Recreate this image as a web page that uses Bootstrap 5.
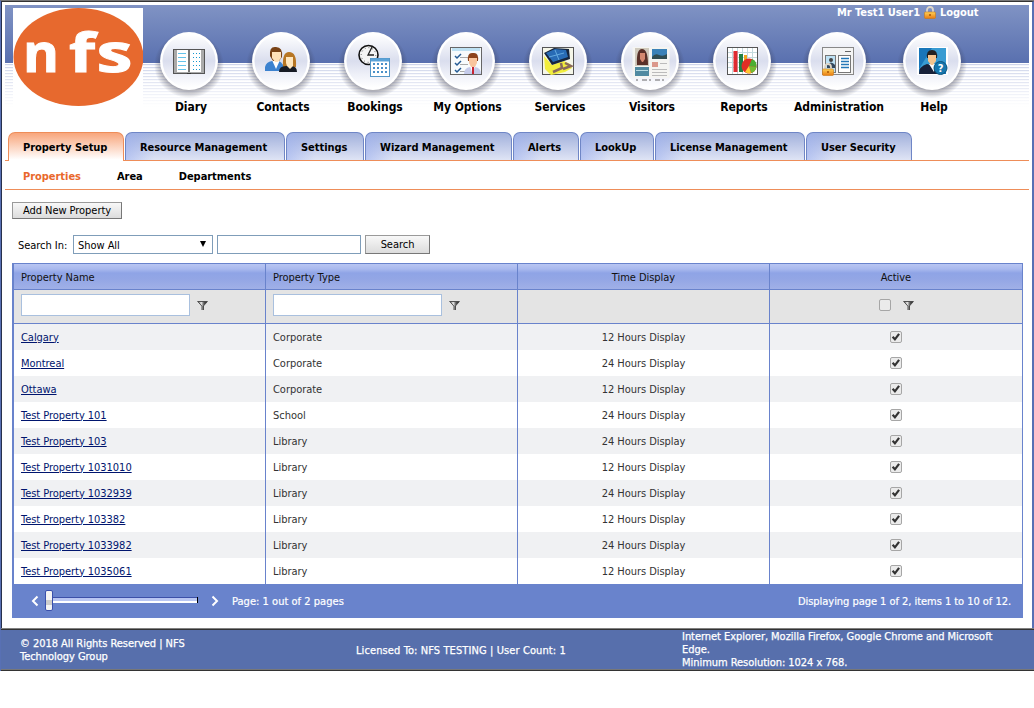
<!DOCTYPE html>
<html lang="en">
<head>
<meta charset="utf-8">
<title>Property Setup</title>
<link href="https://cdn.jsdelivr.net/npm/bootstrap@5.3.0/dist/css/bootstrap.min.css" rel="stylesheet">
<style>
body{font-family:"DejaVu Sans Condensed","DejaVu Sans",sans-serif;font-stretch:condensed;font-size:11px;line-height:13px;color:#000;background:#fff;letter-spacing:-.04px}
.shell{height:671px;border-left:1px solid #5870b4;border-top:1px solid #777;}
.inner{height:627px;border-left:1px solid #27304c;border-right:2px solid #5870b4;border-top:1px solid #333;padding:3px 3px 0}
.masthead{height:127px;position:relative;background:
 linear-gradient(rgba(255,255,255,0) 58px,rgba(255,255,255,.1) 58px,#fff 102px),
 linear-gradient(#8093c4,#5970af) 0 0/100% 58px no-repeat,
 repeating-linear-gradient(#fff 0 1px,#c9d0e8 1px 2px,#f3f5fb 2px 3px) 0 58px/100% 45px no-repeat;}
.logo{margin:3px 0 0 8px;width:130px;height:99px;flex:none}
.logo text{font-family:"Open Sans",sans-serif;font-stretch:normal;font-weight:700;letter-spacing:0}
.usr{position:absolute;left:832px;top:1px;color:#fff;font-weight:700;white-space:nowrap;height:13px}
.mods{display:grid;grid-template-columns:92px 92px 92px 93px 92px 92px 92px 98px 92px;padding:22px 0 0 2px}
.mods a{color:#000;font-weight:700;font-size:12px;line-height:16px;text-decoration:none;text-align:center;white-space:nowrap}
.mods svg{display:block;margin:0 auto;width:72px;height:72px;position:relative;left:-2px}
.mods span{display:block}
.tabs{height:29px;border-bottom:1px solid #ee8d59;padding-left:3px;gap:1px}
.tabs a{height:28px;padding:8px 0 0 14px;border:1px solid #6f86c6;border-bottom:0;border-radius:7px 7px 0 0;background:linear-gradient(90deg,rgba(155,175,240,.55),rgba(155,175,240,0) 28px),linear-gradient(#a2b1dc,#dfe4f5);color:#000;text-decoration:none;font-weight:700;white-space:nowrap;line-height:13px}
.tabs a.on{height:29px;border-color:#ee8d59;background:linear-gradient(#f8a67c,#fff 95%)}
.w1{width:116px}.w2{width:160px}.w3{width:78px}.w4{width:147px}.w5{width:66px}.w6{width:74px}.w7{width:150px}.w8{width:106px}
.subs{height:29px;border-bottom:1px solid #ee8d59;padding:9px 0 0 18px;font-weight:700;gap:36px}
.subs a{color:#000;text-decoration:none}
.subs a.on{color:#e9682c}
.body-area{padding:12px 6px 0 7px}
.wbtn{display:block;border:1px solid #9a9a9a;border-right-color:#777;border-bottom-color:#777;background:linear-gradient(#f8f8f8,#dcdcdc);padding:0;font-size:11px;line-height:13px;text-align:center;color:#000;letter-spacing:-.04px}
.add{width:110px;height:17px}
.go{width:65px;height:19px;margin-left:4px}
.find{margin-top:16px;padding-left:6px;height:19px}
.find span{padding-top:1px}
.lbl{width:50px;white-space:nowrap}
.sel{width:140px;height:19px;border:1px solid #7f9db9;padding:0 5px 0 4px;margin-left:5px}
.txt{width:144px;height:19px;border:1px solid #7f9db9;margin-left:4px;padding:0}
.gridbox{margin-top:9px;border:1px solid #6983cc;border-left-width:2px;width:1011px}
.gridbox table{width:100%;table-layout:fixed;border-collapse:separate;border-spacing:0;margin:0}
.gridbox td,.gridbox th{padding:0 0 0 7px;font-weight:400;border-right:1px solid #6983cc;height:26px;vertical-align:middle;color:#333}
.gridbox td:last-child,.gridbox th:last-child{border-right:0}
.gridbox .mid{text-align:center;padding:0}
.gridbox th,.gridbox th.mid{color:#111;padding-top:2px;border-bottom:1px solid #6983cc;background:linear-gradient(#b9c6f2 0,#a9b9ee 5px,#8fa4e6 9px,#93a6e5 15px,#a0b0e7 25px)}
.gridbox .flt td{height:34px;background:#e4e4e4;border-bottom:1px solid #6983cc;padding-bottom:3px}
.gridbox .odd td{background:#f0f1f3}
.gridbox a{color:#00156e;text-decoration:underline}
.fi{width:169px;height:22px;border:1px solid #a9c0de;padding:0;display:block}
.fun{width:11px;height:11px;margin-left:7px;display:block}
.flt .mid .fun{margin-left:12px}
.ck{width:12px;height:12px;display:block;margin:0 auto 1px}
.pager{height:33px;background:#6983cc;color:#fff;-webkit-text-stroke:.2px #fff;padding:0 11px 0 16px}
.pager span{padding-top:2px}
.pager .pg{margin-left:12px;letter-spacing:.03px}
.foot{height:43px;background:#576fac;border-top:1px solid #808080;border-bottom:1px solid #333;box-shadow:inset 0 1px #333,inset 0 -1px #777;color:#fff;-webkit-text-stroke:.25px #fff}
.foot .c1{width:335px;padding-left:19px}.foot .c2{width:346px;padding:1px 0 0 20px;letter-spacing:.1px}.foot .c3{width:322px}
</style>
</head>
<body>
<svg width="0" height="0" class="position-absolute">
<defs>
<radialGradient id="sh"><stop offset=".68" stop-color="#334" stop-opacity=".55"/><stop offset="1" stop-color="#334" stop-opacity="0"/></radialGradient>
<linearGradient id="disc" x1="0" y1="0" x2="0" y2="1"><stop offset="0" stop-color="#fff"/><stop offset=".5" stop-color="#dadeee"/><stop offset=".75" stop-color="#eef0f8"/><stop offset="1" stop-color="#fff"/></linearGradient>
<linearGradient id="fg"><stop offset="0" stop-color="#555"/><stop offset=".35" stop-color="#eee"/><stop offset=".65" stop-color="#555"/><stop offset="1" stop-color="#222"/></linearGradient>
<linearGradient id="gold" x1="0" y1="0" x2="0" y2="1"><stop offset="0" stop-color="#ffd257"/><stop offset="1" stop-color="#e87a10"/></linearGradient>
<symbol id="base" viewBox="0 0 72 72"><ellipse cx="36" cy="38" rx="35" ry="33" fill="url(#sh)"/><circle cx="36" cy="34" r="29" fill="#fff"/><circle cx="36" cy="34" r="26.5" fill="url(#disc)"/></symbol>
<symbol id="fun" viewBox="0 0 11 11"><path d="M.8 1.500h9.600L6.600 5.700V10H4.600V5.700z" fill="url(#fg)"/><path d="M.3 1.500h10.400M1.200 2l3.600 4M10 2L6.400 6M5 6v4M6.500 6v4" fill="none" stroke="#444" stroke-width=".9"/></symbol>
<symbol id="box" viewBox="0 0 12 12"><rect x=".5" y=".5" width="11" height="11" rx="1.500" fill="#ebebeb" stroke="#a6a6a6"/></symbol>
<symbol id="chk" viewBox="0 0 12 12"><use href="#box"/><path d="M2.600 5.800l2.300 2.500 4.200-5.500" fill="none" stroke="#333" stroke-width="2.200"/></symbol>
<symbol id="lock" viewBox="0 0 12 13"><path d="M3 6V4a3 3 0 0 1 6 0v2" fill="none" stroke="#ded6c8" stroke-width="1.800"/><rect x=".5" y="6" width="11" height="6.500" rx="1" fill="url(#gold)" stroke="#c97b16" stroke-width=".6"/><path d="M6 8v2" stroke="#a04e00" stroke-width="1.400"/></symbol>
</defs>
</svg>
<div class="shell">
<div class="inner">
<header class="masthead d-flex align-items-start">
<svg class="logo" viewBox="0 0 130 99"><rect width="130" height="99" fill="#fff"/><ellipse cx="65.500" cy="49" rx="65" ry="49" fill="#e7692e"/><text y="64" font-size="54" fill="#fff" stroke="#fff" stroke-width="1"><tspan x="10" textLength="36" lengthAdjust="spacingAndGlyphs">n</tspan><tspan x="56" textLength="26" lengthAdjust="spacingAndGlyphs">f</tspan><tspan x="83.500" textLength="36" lengthAdjust="spacingAndGlyphs">s</tspan></text></svg>
<div class="usr d-flex"><span>Mr Test1 User1</span><svg width="12" height="13" class="mx-1"><use href="#lock"/></svg><span>Logout</span></div>
<nav class="mods">
<a href="#"><svg viewBox="0 0 72 72"><use href="#base"/><g transform="translate(20 21)"><rect x=".5" y="1.500" width="31" height="24" fill="#aaa" stroke="#555"/><path d="M4 2h11v22H4zM17 2h11v22H17z" fill="#fff"/><path d="M5 5.500h8M5 9.500h8M5 13.500h8M5 17.500h8M5 21.500h8" stroke="#64c4ec"/><path d="M20 5.500h8M20 9.500h8M20 13.500h8M20 17.500h8M20 21.500h8" stroke="#1697cf" stroke-dasharray="1 2"/><path d="M16 2v22" stroke="#777" stroke-width="2"/><path d="M14 25.500h4" stroke="#333"/></g></svg><span>Diary</span></a>
<a href="#"><svg viewBox="0 0 72 72"><use href="#base"/><g transform="translate(20 18)"><path d="M0 26v-4q1-5 7-6h7q5 2 5 10z" fill="#3c82cf"/><path d="M7 15l4 9 4-9z" fill="#fff"/><path d="M5 11q-1-10 6-9 7 0 6 10l-3 4H8z" fill="#784216"/><path d="M7 7q6 0 9 0v6l-3 4h-3l-3-4z" fill="#ffe1b8"/><path d="M18 22q-1-15 6-15 8 0 7 15z" fill="#b77624"/><path d="M14 27q0-6 7-6h5q6 0 6 6z" fill="#171b24"/><path d="M22 21l3 3 3-3v-9h-7v6z" fill="#ffe6bd"/></g></svg><span>Contacts</span></a>
<a href="#"><svg viewBox="0 0 72 72"><use href="#base"/><circle cx="31.500" cy="28" r="9.500" fill="#f5f5f5" stroke="#111" stroke-width="1.600"/><circle cx="31.500" cy="28" r="7.300" fill="none" stroke="#444" stroke-dasharray=".8 3"/><path d="M35 20l-4 8h6" fill="none" stroke="#222" stroke-width="1.300"/><rect x="33.500" y="31.500" width="19" height="18" fill="#fff" stroke="#5597c8"/><path d="M34 33h18" stroke="#5ca3d8" stroke-width="3"/><path d="M36 37h15M36 41h15M36 45h15" stroke="#4b90c8" stroke-width="2" stroke-dasharray="2 2"/></svg><span>Bookings</span></a>
<a href="#"><svg viewBox="0 0 72 72"><use href="#base"/><rect x="20.500" y="20.500" width="31" height="27" fill="#f7fbfd" stroke="#666"/><path d="M22 22.500h28" stroke="#bde1f3" stroke-width="3"/><path d="M30 30.500h8M30 37.500h8M30 44.500h7" stroke="#aaa"/><path d="M25 29l2 2 4-4M25 36l2 2 4-4M25 43l2 2 4-4" fill="none" stroke="#245b95" stroke-width="1.500"/><path d="M34 47q0-6 6-7h5q6 1 6 7z" fill="#c5cbea"/><path d="M40 39h5l-2.500 8z" fill="#fff"/><path d="M43 40v7" stroke="#c72534" stroke-width="2"/><path d="M38 34q-1-9 5-8 6-1 5 8z" fill="#8c431c"/><path d="M39 31h8v5l-2 4h-4l-2-4z" fill="#f8c59e"/></svg><span>My Options</span></a>
<a href="#"><svg viewBox="0 0 72 72"><use href="#base"/><rect x="20.500" y="20.500" width="31" height="27" fill="#f5f6e8" stroke="#555"/><path d="M22 29l8 9 12-4 6 3 2 4-7 4-14 3-6-6z" fill="#f1ed3d"/><path d="M22 26l10-5 15 1 1 10-18 6z" fill="#16253e"/><path d="M24 26l9-4 11 1 2 7-15 5z" fill="#286bb5"/><path d="M33 23l4 10M27 30l15-4" stroke="#63a9df"/><path d="M39 36l1 5-9 4M43 36l6 3-8 3" fill="none" stroke="#8a6a5c" stroke-width="2.500"/></svg><span>Services</span></a>
<a href="#"><svg viewBox="0 0 72 72"><use href="#base"/><rect x="18.500" y="20" width="37" height="31" fill="#f5f5f2"/><rect x="21" y="21" width="14" height="18" fill="#cfc9bc"/><path d="M23 38q-1-16 5-16t6 16z" fill="#593029"/><path d="M26 26h5v6l-2 3h-1l-2-3z" fill="#d48870"/><rect x="38" y="22" width="15" height="10" fill="#3b82b8"/><path d="M38 30q3-4 7-2t8-1v5H38z" fill="#314d52"/><path d="M38 35h6v5h-6z" fill="#db988b"/><path d="M46 36.500h7M38 42.500h15M38 45.500h15M38 48.500h15" stroke="#bbb"/><path d="M21 40h14v9H21z" fill="#508aa1"/><path d="M22 43.500h12" stroke="#b9dbe2"/><path d="M22 53h32" stroke="#666" stroke-dasharray="2 4 5 2"/></svg><span>Visitors</span></a>
<a href="#"><svg viewBox="0 0 72 72"><use href="#base"/><rect x="21.500" y="20.500" width="30" height="27" fill="#fff" stroke="#555"/><path d="M22 25.500h29M22 30.500h29M22 35.500h29M22 40.500h29M26.500 21v26M31.500 21v26M36.500 21v26M41.500 21v26M46.500 21v26" stroke="#c3dade"/><path d="M29.500 24v21" stroke="#df2b31" stroke-width="4"/><path d="M35 27v18" stroke="#218044" stroke-width="4"/><path d="M39.500 28v16" stroke="#eda51c" stroke-width="3"/><circle cx="43" cy="39" r="7.500" fill="#e02e25"/><path d="M43 39l3-7a7.500 7.500 0 0 1 4.500 8z" fill="#4bae30"/><path d="M43 39l7.500 1a7.500 7.500 0 0 1-5.500 6z" fill="#73bd32"/><path d="M43 39l2 7.300a7.500 7.500 0 0 1-6-1.300z" fill="#ffc933"/></svg><span>Reports</span></a>
<a href="#"><svg viewBox="0 0 72 72"><use href="#base"/><rect x="21.500" y="20.500" width="31" height="27" fill="#f4f4f4" stroke="#888"/><path d="M44 24.500h6" stroke="#666"/><rect x="24.500" y="28.500" width="10" height="17" fill="#bde1f4" stroke="#777"/><circle cx="30" cy="33" r="2" fill="#444"/><path d="M26 38q4-5 8 0v3h-8z" fill="#34495e"/><rect x="37.500" y="28.500" width="12" height="17" fill="#fff" stroke="#777"/><path d="M40 31.500h8M40 34.500h8M40 37.500h8M40 40.500h8" stroke="#2377b8" stroke-width="1.300"/><use href="#lock" x="21" y="36" width="12" height="13"/></svg><span>Administration</span></a>
<a href="#"><svg viewBox="0 0 72 72"><use href="#base"/><path d="M21 20h31v28H21z" fill="#fff"/><path d="M23 21h27v26H23z" fill="#1876b9"/><path d="M36 21h14v16L23 42z" fill="#389bd2"/><path d="M23 47q0-8 8-10l7 2 6 8z" fill="#182139"/><path d="M33 37h6l-1 8z" fill="#fff"/><path d="M31 31q-1-8 5-8t5 8z" fill="#222"/><path d="M32 28h8v6l-3 4h-2l-3-4z" fill="#f5c58e"/><circle cx="44.500" cy="41" r="6.500" fill="#1677ae" stroke="#0c547f"/><text x="44.500" y="45" text-anchor="middle" font-size="11" fill="#fff" font-weight="700">?</text></svg><span>Help</span></a>
</nav>
</header>
<nav class="tabs d-flex">
<a class="on w1" href="#">Property Setup</a><a class="w2" href="#">Resource Management</a><a class="w3" href="#">Settings</a><a class="w4" href="#">Wizard Management</a><a class="w5" href="#">Alerts</a><a class="w6" href="#">LookUp</a><a class="w7" href="#">License Management</a><a class="w8" href="#">User Security</a>
</nav>
<nav class="subs d-flex"><a class="on" href="#">Properties</a><a href="#">Area</a><a href="#">Departments</a></nav>
<main class="body-area">
<button class="wbtn add">Add New Property</button>
<div class="find d-flex align-items-center"><span class="lbl">Search In:</span><div class="sel d-flex align-items-center justify-content-between"><span>Show All</span><svg width="8" height="7"><path d="M1 0h6L4 6z"/></svg></div><input class="txt" aria-label="Search text"><button class="wbtn go">Search</button></div>
<section class="gridbox">
<table>
<colgroup><col style="width:252px"><col style="width:252px"><col style="width:252px"><col></colgroup>
<thead><tr><th>Property Name</th><th>Property Type</th><th class="mid">Time Display</th><th class="mid">Active</th></tr></thead>
<tbody>
<tr class="flt"><td><div class="d-flex align-items-center"><input class="fi" aria-label="Name filter"><svg class="fun"><use href="#fun"/></svg></div></td><td><div class="d-flex align-items-center"><input class="fi" aria-label="Type filter"><svg class="fun"><use href="#fun"/></svg></div></td><td></td><td class="mid"><div class="d-flex align-items-center justify-content-center"><svg width="12" height="12"><use href="#box"/></svg><svg class="fun"><use href="#fun"/></svg></div></td></tr>
<tr class="odd"><td><a href="#">Calgary</a></td><td>Corporate</td><td class="mid">12 Hours Display</td><td class="mid"><svg class="ck"><use href="#chk"/></svg></td></tr>
<tr><td><a href="#">Montreal</a></td><td>Corporate</td><td class="mid">24 Hours Display</td><td class="mid"><svg class="ck"><use href="#chk"/></svg></td></tr>
<tr class="odd"><td><a href="#">Ottawa</a></td><td>Corporate</td><td class="mid">12 Hours Display</td><td class="mid"><svg class="ck"><use href="#chk"/></svg></td></tr>
<tr><td><a href="#">Test Property 101</a></td><td>School</td><td class="mid">24 Hours Display</td><td class="mid"><svg class="ck"><use href="#chk"/></svg></td></tr>
<tr class="odd"><td><a href="#">Test Property 103</a></td><td>Library</td><td class="mid">24 Hours Display</td><td class="mid"><svg class="ck"><use href="#chk"/></svg></td></tr>
<tr><td><a href="#">Test Property 1031010</a></td><td>Library</td><td class="mid">12 Hours Display</td><td class="mid"><svg class="ck"><use href="#chk"/></svg></td></tr>
<tr class="odd"><td><a href="#">Test Property 1032939</a></td><td>Library</td><td class="mid">24 Hours Display</td><td class="mid"><svg class="ck"><use href="#chk"/></svg></td></tr>
<tr><td><a href="#">Test Property 103382</a></td><td>Library</td><td class="mid">12 Hours Display</td><td class="mid"><svg class="ck"><use href="#chk"/></svg></td></tr>
<tr class="odd"><td><a href="#">Test Property 1033982</a></td><td>Library</td><td class="mid">24 Hours Display</td><td class="mid"><svg class="ck"><use href="#chk"/></svg></td></tr>
<tr><td><a href="#">Test Property 1035061</a></td><td>Library</td><td class="mid">12 Hours Display</td><td class="mid"><svg class="ck"><use href="#chk"/></svg></td></tr>
</tbody></table>
<div class="pager d-flex align-items-center">
<svg width="190" height="24" viewBox="0 0 190 24"><path d="M7.500 7.500L3 12l4.500 4.500M182.500 7.500L187 12l-4.500 4.500" fill="none" stroke="#fff" stroke-width="2"/><path d="M22 8.500h145" stroke="#3c50a8"/><path d="M22 10.500h145" stroke="#b9c6f2" stroke-width="3"/><path d="M22 13h145" stroke="#fff" stroke-width="2"/><path d="M167.500 8v6" stroke="#000"/><rect x="15.500" y="1.500" width="7" height="20" rx="1.500" fill="#f3f3f3" stroke="#3950ac"/><path d="M16 11h6v5h-6z" fill="#ccc"/></svg>
<span class="pg">Page: 1 out of 2 pages</span><span class="ms-auto">Displaying page 1 of 2, items 1 to 10 of 12.</span></div>
</section>
</main>
</div>
<footer class="foot d-flex align-items-center"><div class="c1">© 2018 All Rights Reserved | NFS<br>Technology Group</div><div class="c2">Licensed To: NFS TESTING | User Count: 1</div><div class="c3">Internet Explorer, Mozilla Firefox, Google Chrome and Microsoft Edge.<br>Minimum Resolution: 1024 x 768.</div></footer>
</div>
<script src="https://cdn.jsdelivr.net/npm/bootstrap@5.3.0/dist/js/bootstrap.bundle.min.js"></script>
</body>
</html>
